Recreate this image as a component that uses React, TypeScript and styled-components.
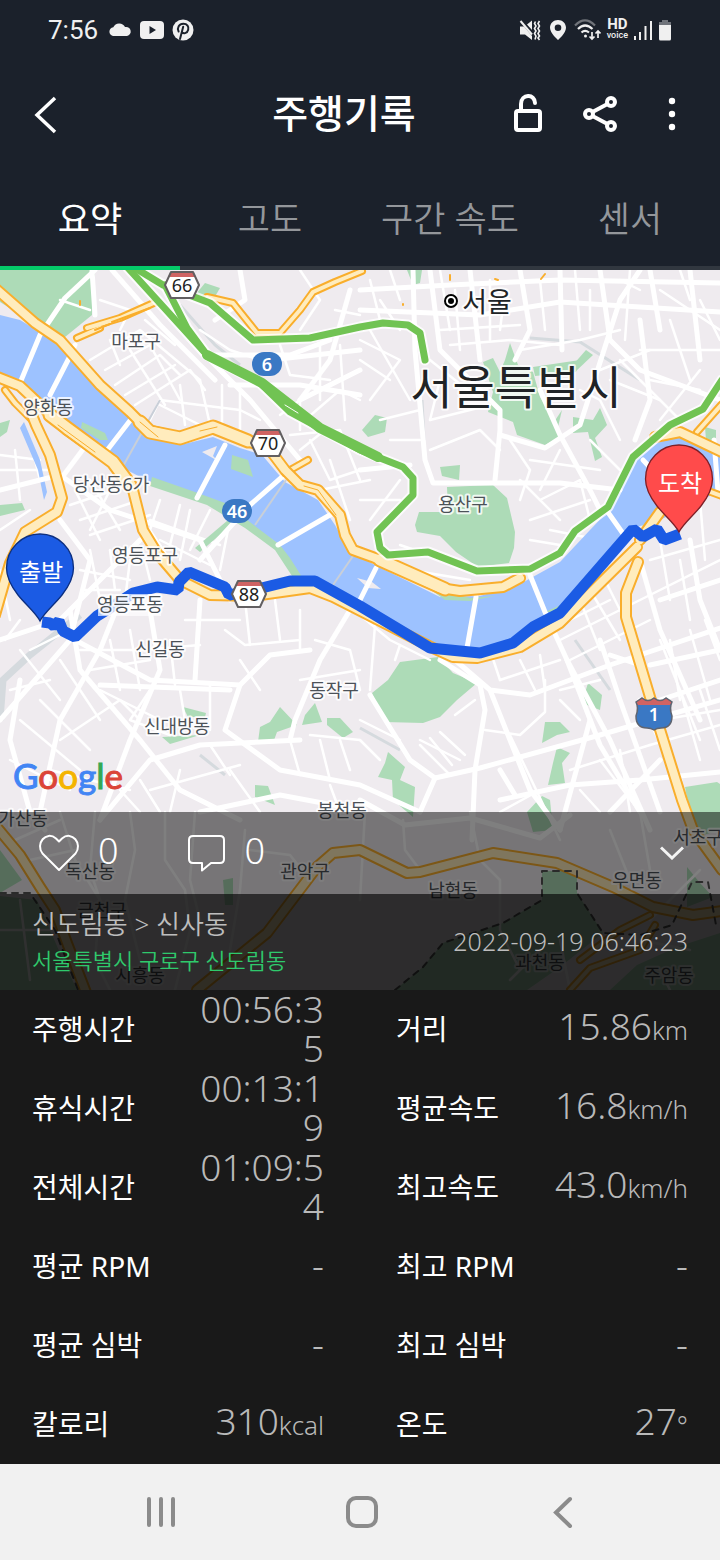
import React from 'react';
import styled, { createGlobalStyle } from 'styled-components';

const GlobalStyle = createGlobalStyle`
  * { box-sizing: border-box; }
  html, body { margin: 0; padding: 0; }
  body {
    background: #191919;
    font-family: "Noto Sans", "Noto Sans CJK KR", sans-serif;
    color: #fff;
  }
  button { border: 0; padding: 0; background: none; color: inherit; font: inherit; }
`;

const Screen = styled.div`
  display: flex;
  flex-direction: column;
  min-height: 100vh;
`;

/* ---------- top area ---------- */

const StatusBar = styled.div`
  display: flex;
  align-items: center;
  justify-content: space-between;
  height: 60px;
  padding: 0 48px;
  background: #1b212b;
  color: #f0f0f0;
`;

const StatusGroup = styled.div<{ $gap: number }>`
  display: flex;
  align-items: center;
  gap: ${(p) => p.$gap}px;
  svg { display: block; }
`;

const Clock = styled.span`
  font: 400 26px/30px Roboto, sans-serif;
`;

const HdVoice = styled.span`
  display: flex;
  flex-direction: column;
  align-items: center;
  padding-bottom: 2px;
  font: 700 15px/13px Roboto, sans-serif;
`;

const VoiceLine = styled.span`
  font: 500 9px/9px Roboto, sans-serif;
`;

const AppBar = styled.header`
  display: grid;
  grid-template-columns: 196px 1fr 216px;
  align-items: center;
  height: 108px;
  padding-right: 12px;
  background: #1b212b;
`;

const Title = styled.h1`
  margin: 0;
  padding-bottom: 2px;
  font-size: 39px;
  line-height: 56px;
  font-weight: 500;
  text-align: center;
  white-space: nowrap;
`;

const BarButton = styled.button`
  display: flex;
  align-items: center;
  justify-content: center;
  width: 72px;
  height: 72px;
`;

const BackButton = styled(BarButton)`
  margin-left: 10px;
`;

const Actions = styled.div`
  display: flex;
`;

const Tabs = styled.nav`
  display: grid;
  grid-template-columns: repeat(4, 1fr);
  background: #1b212b;
`;

const Tab = styled.button<{ $active?: boolean }>`
  height: 102px;
  padding-top: 4px;
  border-bottom: 4px solid ${(p) => (p.$active ? '#05ca69' : '#31373f')};
  color: ${(p) => (p.$active ? '#fff' : '#94979b')};
  font-size: 35px;
  font-weight: ${(p) => (p.$active ? 400 : 350)};
  line-height: 52px;
  white-space: nowrap;
`;

/* ---------- map ---------- */

const MapArea = styled.section`
  position: relative;
  overflow: hidden;
`;

const MapSvg = styled.svg`
  display: block;
  width: 100%;
  height: auto;
  background: #efebef;
`;

const PlaceName = styled.text`
  fill: #4c5258;
  stroke: #ffffffd0;
  stroke-width: 4px;
  stroke-linejoin: round;
  paint-order: stroke;
  font-size: 18px;
  text-anchor: middle;
`;

const CityName = styled(PlaceName)<{ $size: number }>`
  fill: #202326;
  font-size: ${(p) => p.$size}px;
`;

const ShieldText = styled.text<{ $light?: boolean }>`
  fill: ${(p) => (p.$light ? '#fff' : '#222')};
  font-size: 18px;
  font-weight: ${(p) => (p.$light ? 600 : 400)};
  text-anchor: middle;
`;

const PinText = styled.text`
  fill: #fff;
  font-size: 24px;
  text-anchor: middle;
`;

const Wordmark = styled.text`
  font-family: Lato, sans-serif;
  font-size: 35px;
  stroke-width: 1px;
`;

const MapOverlay = styled.div`
  position: absolute;
  left: 0;
  right: 0;
  bottom: 0;
`;

const SocialBar = styled.div`
  display: flex;
  align-items: center;
  gap: 68px;
  height: 82px;
  padding: 0 24px 0 38px;
  background: rgba(0, 0, 0, 0.5);
`;

const SocialButton = styled.button`
  display: flex;
  align-items: center;
  gap: 18px;
`;

const Count = styled.span`
  padding-bottom: 4px;
  font-size: 36px;
  font-weight: 350;
  line-height: 42px;
`;

const ExpandButton = styled(BarButton)`
  width: 48px;
  height: 48px;
  margin-left: auto;
`;

const RideInfo = styled.div`
  display: flex;
  align-items: center;
  justify-content: space-between;
  height: 96px;
  padding: 0 32px 2px;
  background: rgba(0, 0, 0, 0.81);
`;

const RideName = styled.div`
  color: #bdbdbd;
  font-size: 26px;
  font-weight: 350;
  line-height: 38px;
`;

const RidePlace = styled.div`
  color: #2fc96c;
  font-size: 22px;
  font-weight: 350;
  line-height: 34px;
`;

const RideDate = styled.time`
  color: #bdbdbd;
  font-size: 25px;
  font-weight: 350;
  line-height: 36px;
`;

/* ---------- figures ---------- */

const Stats = styled.dl`
  display: grid;
  grid-template-columns: 1fr 1fr;
  column-gap: 72px;
  grid-auto-rows: 79px;
  align-content: start;
  flex: 1;
  margin: 0;
  padding: 0 32px;
  background: #191919;
`;

const Stat = styled.div`
  display: flex;
  align-items: center;
  justify-content: space-between;
`;

const StatLabel = styled.dt`
  padding-bottom: 2px;
  font-size: 28px;
  line-height: 40px;
  white-space: nowrap;
`;

const StatValue = styled.dd`
  width: 140px;
  margin: 0;
  padding-bottom: 4px;
  color: #b9b9b9;
  font-size: 37px;
  font-weight: 300;
  line-height: 39px;
  text-align: right;
  word-break: break-all;
`;

const Unit = styled.span`
  font-size: 26px;
`;

const NavBar = styled.footer`
  display: grid;
  grid-template-columns: repeat(3, 1fr);
  align-items: center;
  height: 96px;
  padding: 0 57px 0 60px;
  background: #f1f1f1;
`;

const NavButton = styled.button`
  display: flex;
  align-items: center;
  justify-content: center;
  height: 72px;
`;

/* ---------- map data ---------- */

const parks = [
  '0,270 95,270 92,315 65,337 45,330 0,302',
  '483,362 493,358 500,372 505,360 510,343 518,365 533,372 540,397 557,425 560,437 545,445 517,435 513,422 488,412 493,392',
  '533,367 580,360 576,372 535,376',
  '586,350 593,355 575,372 572,366',
  '573,417 593,420 600,408 607,425 595,438 602,457 595,461 588,432 573,433',
  '552,425 562,410 558,427',
  '375,415 387,418 385,432 368,437 362,430',
  '440,467 460,465 459,480 442,476',
  '447,487 493,485 507,498 515,532 514,548 509,563 478,567 456,552 440,536 417,532 415,525 419,512 448,512',
  '400,662 438,657 453,673 477,683 457,700 440,717 423,723 385,722 372,693 388,680',
  '588,683 602,695 600,710 582,703',
  '545,722 560,722 570,732 557,735 542,743',
  '557,747 570,753 562,763 565,783 548,785 553,763',
  '388,752 405,767 400,780 415,787 413,817 393,800 392,780 378,777 385,763',
  '542,796 550,800 553,830 533,832 527,812',
  '685,787 717,782 720,784 720,830 700,836 690,815',
  '183,707 206,713 205,717 188,717',
  '162,737 200,735 170,744',
  '280,707 297,725 277,732 273,743 258,742 260,727 270,722',
  '315,703 322,722 302,725 305,715',
  '327,718 340,718 353,732 343,738 327,725',
  '255,785 268,786 275,805 255,797',
  '223,880 233,878 233,905 225,905',
  '0,850 22,880 0,893',
  '0,896 37,900 60,953 77,990 0,990',
  '542,871 577,871 577,893 603,933 560,967 527,990 395,990 423,967 443,943 503,923 542,900',
  '687,867 700,883 713,897 687,907',
  '720,933 677,947 637,965 610,990 720,990',
  '205,283 220,288 213,300 196,294',
  '407,270 422,270 420,283 413,285',
  '0,505 22,503 25,510 0,516',
  '0,423 10,420 7,432 0,437',
  '705,427 716,430 716,445 706,440',
];

const riverPath =
  'M0 315 L20 320 45 335 70 350 100 385 130 412 148 436 180 445 213 437 240 448 262 455 285 482 318 500 335 525 350 552 375 565 440 597 480 596 520 584 560 562 590 530 612 507 635 460 665 437 690 432 720 450 720 492 700 500 660 520 627 530 560 612 533 625 513 642 480 652 430 645 360 603 313 577 302 577 290 565 280 545 233 512 207 498 150 482 123 468 113 455 67 430 55 408 25 388 0 373Z';

const riverside = [
  '82,422 105,433 108,440 100,440 81,428',
  '232,455 248,460 253,477 231,469',
  '152,477 195,492 225,503 280,545 290,558 302,577 292,576 275,550 245,528 207,505 150,486',
  '65,425 115,462 110,462 63,432',
  '420,582 440,590 470,598 495,596 470,601 445,600',
  '545,612 565,603 560,612',
  '658,510 642,526 652,530',
];

/* broad avenues */
const avenues = [
  '95,270 65,298 40,335 20,383', '92,270 95,315', '75,345 68,360 50,395',
  '132,418 105,453', '225,445 197,498', '290,470 250,505 200,560', '335,512 278,545',
  '376,568 360,600', '476,597 467,648', '530,575 545,612 567,660 600,745 640,812',
  '605,508 624,535', '643,460 660,478', '714,440 718,492',
  '130,270 200,350 250,400 300,460', '112,270 160,325 215,380',
  '413,270 415,350 425,460 433,483 560,483 620,490', '430,270 440,350 500,410 500,430 495,480',
  '540,390 560,435 590,490 600,510', '500,435 545,448 580,425 620,300 640,270',
  '360,290 450,285 560,280 720,283', '360,310 480,315 560,302 720,312',
  '470,270 480,360', '520,270 530,330 515,360', '560,270 562,350', '600,270 610,340 640,370 720,400',
  '650,270 660,330', '690,270 700,360', '640,320 650,400 635,440',
  '360,470 410,465', '0,490 60,475 110,510 200,540 230,600',
  '0,640 60,620 110,570 140,540', '60,520 90,560 70,640 0,720',
  '70,610 80,670 140,740 180,790 240,820', '20,680 10,740 30,812 45,830',
  '120,600 100,650 60,720 40,812', '150,610 160,670 130,740 100,820',
  '75,640 150,680 240,685 270,655 310,650', '240,685 225,730 280,770 360,785 420,812',
  '100,685 230,690', '100,820 150,760 200,745 300,740', '200,600 195,680',
  '350,610 320,660 295,720 290,740', '440,660 480,685 485,710 475,770 472,840',
  '455,660 490,690 530,695 610,665 720,628', '610,655 640,665 650,690',
  '490,690 530,790 560,830', '567,660 610,740 650,830', '600,640 620,700 660,812',
  '640,560 660,630 700,720', '690,540 700,600 720,650', '660,600 720,580',
  '370,695 410,760 435,778 480,768 600,735 720,700', '435,778 420,812',
  '500,800 570,785 640,780 720,772', '590,720 560,830', '500,770 515,795',
  '660,760 610,812', '650,665 720,650', '660,700 720,680', '640,700 680,780',
  '360,800 405,825 470,818 540,838 570,815', '200,812 280,795 360,810',
  '240,270 245,300 215,320', '90,440 60,480', '270,360 360,350', '300,400 360,370',
  '230,385 300,385 360,395', '350,290 330,360 300,400', '215,355 290,355 330,340',
];

/* side streets */
const streets = [
  '90,360 140,330 200,380', '105,370 150,345', '115,385 160,355 180,375', '125,395 175,365', '135,405 190,370 205,390',
  '150,420 160,400 240,410 260,420', '160,405 200,425', '180,385 185,425', '200,380 210,425', '222,385 222,430', '240,390 240,430',
  '145,320 175,345', '150,345 180,400', '130,350 165,405', '110,340 120,365', '200,330 230,350 260,360',
  '300,270 320,300 300,330', '320,345 320,400', '340,345 345,420', '335,310 360,315', '280,345 290,375 330,380',
  '305,420 340,390 360,400', '290,435 340,430 360,480', '310,440 330,480 360,470', '320,490 370,480', '330,460 350,520',
  '300,450 325,430 350,440', '280,415 300,400 300,430', '60,300 90,310', '100,300 130,310 120,330',
  '0,455 40,460', '0,470 50,470', '15,450 20,500', '30,440 40,480', '0,530 30,510',
  '75,490 100,540', '90,480 120,530', '110,490 90,530', '80,520 140,500', '90,535 150,515', '70,505 130,485',
  '160,500 150,530 170,560', '180,505 170,545', '150,520 220,545', '160,540 210,565', '190,510 180,560', '210,510 190,550', '230,520 220,570',
  '80,570 130,580', '85,590 120,590', '90,550 100,600', '110,550 115,590', '130,560 125,600', '145,560 150,580',
  '0,570 10,620', '5,640 20,620', '20,560 30,560', '20,650 60,700', '10,690 50,680', '30,650 70,630',
  '80,650 140,650 200,645', '90,670 150,660', '110,640 120,690', '130,630 140,690', '170,640 175,685', '185,620 240,620',
  '60,660 100,720', '40,700 90,750', '20,720 80,770', '10,760 70,790', '50,770 130,790', '60,740 120,700 140,720',
  '100,690 160,720', '150,690 130,720 170,735', '180,690 185,720', '210,685 210,730', '225,630 245,645 300,640',
  '245,600 250,645', '275,600 280,640', '300,610 300,650', '240,660 260,690', '315,640 350,650 360,690', '300,680 360,670',
  '310,735 360,740', '340,740 350,770', '290,740 300,775', '320,740 330,780', '230,770 260,812', '210,745 230,775',
  '140,780 160,812', '150,790 240,765', '170,812 180,770', '120,790 140,812', '330,785 340,812',
  '360,615 390,640 430,660', '375,625 370,690', '400,645 395,660', '360,720 400,740', '360,740 380,760',
  '420,740 460,760', '420,745 450,775', '430,738 452,765', '440,732 465,755', '455,715 475,700', '485,730 520,735 545,712 545,680',
  '490,650 500,680', '540,655 545,690', '520,660 535,690', '500,680 560,660',
  '580,600 600,650', '590,590 620,640', '605,580 640,650', '560,640 640,600', '570,660 650,620', '560,625 610,600', '640,600 720,560',
  '650,560 720,540', '660,540 670,600', '700,500 705,560', '680,560 690,620', '670,640 680,700', '690,630 710,700', '705,620 720,660',
  '660,640 700,740', '680,690 700,760', '700,690 720,750', '660,720 720,710', '650,745 720,725', '560,700 580,720', '560,690 600,680',
  '570,770 650,745', '600,760 640,812', '580,790 600,812', '620,750 630,812', '510,735 560,840', '540,790 500,812',
  '360,340 400,360 370,400', '360,360 390,380', '370,330 410,400', '380,300 400,330', '370,280 380,320', '390,270 400,300',
  '440,270 450,330', '455,290 460,350', '490,280 490,340', '505,290 500,330', '540,280 545,330', '575,270 580,330', '590,290 590,330',
  '620,280 640,290', '630,270 625,340', '660,290 720,330', '670,320 690,380', '640,350 720,350', '700,300 720,340', '680,270 690,300',
  '440,330 520,325', '450,345 510,340 560,345', '520,350 580,340 620,330', '430,360 480,400', '380,420 420,410', '390,440 420,440',
  '430,420 490,405', '430,450 480,430 500,450', '440,380 430,420', '510,440 530,470 520,500', '530,460 600,470', '540,500 580,480 590,520',
  '530,520 590,500', '520,480 560,520', '550,530 600,540', '530,540 560,545', '560,450 540,490', '590,440 620,470', '600,400 620,440',
  '610,380 660,400', '620,360 680,420', '650,380 700,390', '660,420 700,370', '580,390 600,400', '600,370 650,350', '360,500 400,500',
  '370,520 400,480', '380,565 470,580', '400,545 450,562',
  '95,812 90,870 100,900 95,960 110,990', '130,812 135,850 125,900 140,960', '165,812 165,860 185,890 190,930 175,990',
  '195,812 190,880 200,920', '245,830 240,890 230,950', '60,812 75,860 100,900', '15,840 60,820', '30,860 75,850', '250,850 290,855 310,880',
  '365,812 360,900', '403,820 405,850 420,870', '470,812 480,860 500,880 500,930 520,970', '610,830 630,880', '640,812 650,870',
  '700,870 650,920', '560,940 570,990', '510,980 540,950', '20,900 30,980', '0,930 60,930', '640,940 690,950', '660,970 670,990',
];

const highways = [
  '-5,288 35,323 60,340 100,385 130,412 148,430 180,438 213,427 240,438 270,450 285,470 300,485 318,490 340,515 345,535 353,550 375,558 440,588 460,591 503,587 520,578',
  '-5,376 20,386 67,430 113,462 133,490 143,530 157,553 180,580 210,595 253,596 310,588 333,597 433,648 453,657 477,658 520,647 560,623 637,547',
  '30,410 36,425 50,455 62,498 57,512 25,532 10,563 -5,615',
  '638,562 626,593 626,617 653,707 682,800 693,830 722,870',
  '197,990 267,933 317,867 333,853 360,850 407,873 420,872 493,853 557,863 613,887 653,907 693,915 722,911',
  '-5,825 20,855 40,887 55,910 67,943 87,995',
  '655,437 680,432 722,452',
  '640,540 660,512',
];

/* stretches where both carriageways run side by side */
const wideHighways = [
  '50,415 67,428 113,462 130,485', '140,422 150,432 180,438 213,427 248,441', '380,560 445,589',
];

const minorHighways = [
  '87,328 120,318 156,302', '77,338 100,328', '207,297 233,303 257,333 280,333 300,310 313,292 335,282 362,271',
  '697,432 722,404', '700,488 722,496', '5,390 15,403 32,420', '570,990 590,968 640,950 655,925', '580,960 620,930 650,915', '285,473 308,460',
];

const greenways = [
  '128,268 207,355 260,383 290,412 360,450 380,458 403,467 413,478 413,495 377,532 380,548 388,555 428,552 477,571 530,569 560,553 575,531 608,507 633,457 670,425 703,409 722,380',
  '135,268 163,285 210,303 253,340 310,338 360,327 383,323 408,325 420,333 425,360',
  '165,285 187,328 207,355',
];

const routePoints =
  '42,622 50,623 54,626 59,621 63,631 75,637 97,616 110,608 133,593 157,587 178,590 179,582 189,572 225,587 229,595 245,592 290,581 315,581 360,606 430,648 480,653 513,643 533,627 560,613 633,529 643,537 657,529 664,540 680,534';

const places: [string, number, number][] = [
  ['마포구', 136, 348], ['양화동', 48, 414], ['당산동6가', 111, 491], ['용산구', 463, 511],
  ['영등포구', 145, 562], ['영등포동', 130, 611], ['신길동', 160, 656], ['동작구', 334, 697],
  ['신대방동', 177, 733], ['봉천동', 342, 817], ['가산동', 23, 825], ['독산동', 90, 878],
  ['관악구', 305, 878], ['서초구', 698, 844], ['남현동', 453, 897], ['우면동', 637, 887],
  ['금천구', 102, 917], ['시흥동', 140, 982], ['과천동', 540, 969], ['주암동', 669, 982],
];

const wordmark: [string, string][] = [
  ['G', '#4285f4'], ['o', '#db4437'], ['o', '#f4b400'], ['g', '#4285f4'], ['l', '#34a853'], ['e', '#db4437'],
];

const HexShield = ({ x, y, label }: { x: number; y: number; label: string }) => (
  <g transform={`translate(${x} ${y})`}>
    <path d="M-17 0L-11 -13H11L17 0L11 13H-11Z" fill="#fff" />
    <path d="M-14 -8L-11 -13H11L14 -8Z" fill="#cf6363" />
    <path d="M-17 0L-11 -13H11L17 0L11 13H-11Z" fill="none" stroke="#625f61" strokeWidth="2" strokeLinejoin="round" />
    <ShieldText y="7">{label}</ShieldText>
  </g>
);

const PillShield = ({ x, y, label }: { x: number; y: number; label: string }) => (
  <g transform={`translate(${x} ${y})`}>
    <rect x="-15" y="-12" width="30" height="24" rx="12" fill="#3a78c4" />
    <ShieldText $light y="7">{label}</ShieldText>
  </g>
);

const Pin = ({ x, y, fill, edge, label }: { x: number; y: number; fill: string; edge: string; label: string }) => (
  <g transform={`translate(${x} ${y})`}>
    <path
      d="M0 0C-4 -8 -14 -16 -22 -26C-29 -35 -33.500 -43 -33.500 -53A33.500 34 0 0 1 33.500 -53C33.500 -43 29 -35 22 -26C14 -16 4 -8 0 0Z"
      fill={fill}
      stroke={edge}
      strokeWidth="1.3"
    />
    <PinText x="1" y="-40">{label}</PinText>
  </g>
);

const RideMap = () => (
  <MapSvg viewBox="0 270 720 720" role="img" aria-label="서울특별시">
    {parks.map((p) => <polygon key={p} points={p} fill="#addbb7" />)}
    <g fill="none" stroke="#d5dade" strokeWidth="3">
      <polyline points="0,720 3,680 30,655 80,615" strokeWidth="7" />
      <polyline points="180,305 215,345 240,365" />
      <polyline points="530,338 580,342 640,380" />
      <polyline points="422,400 424,440" />
      <polyline points="575,640 610,690" />
      <polyline points="360,728 400,750" />
      <polyline points="200,755 225,775" />
    </g>
    <g fill="none" stroke="#fff" strokeWidth="2.500" strokeLinejoin="round" strokeLinecap="round">
      {streets.map((p) => <polyline key={p} points={p} />)}
    </g>
    <path d={riverPath} fill="#9dc2ff" />
    {riverside.map((p) => <polygon key={p} points={p} fill="#addbb7" />)}
    <path d="M202 452L217 446 213 456 218 461Z M357 578L372 582 381 589 368 588Z" fill="#efebef" />
    <path d="M24 422L40 460 47 492 44 500 38 470 20 428Z" fill="#9dc2ff" />
    <path d="M195 548L234 515L238 519L200 552Z" fill="#addbb7" />
    <g fill="none" stroke="#c9cfd8" strokeWidth="2">
      <path d="M160 400L122 468M286 480L255 525M353 556L333 585" />
    </g>
    <g fill="none" stroke="#fff" strokeWidth="5" strokeLinejoin="round" strokeLinecap="round">
      {avenues.map((p) => <polyline key={p} points={p} />)}
    </g>
    <g fill="none" strokeLinejoin="round" strokeLinecap="round">
      {minorHighways.map((p) => <polyline key={p} points={p} stroke="#f9ae2c" strokeWidth="8" />)}
      {minorHighways.map((p) => <polyline key={p} points={p} stroke="#ffecbd" strokeWidth="4" />)}
      {highways.map((p) => <polyline key={p} points={p} stroke="#f9ae2c" strokeWidth="12" />)}
      {wideHighways.map((p) => <polyline key={p} points={p} stroke="#f9ae2c" strokeWidth="15" />)}
      {highways.map((p) => <polyline key={p} points={p} stroke="#ffecbd" strokeWidth="8" />)}
      {wideHighways.map((p) => <polyline key={p} points={p} stroke="#ffecbd" strokeWidth="11" />)}
      <path d="M140 422L158 437M200 431L217 427M304 486L318 490L336 515M58 425L95 452" stroke="#f9ae2c" strokeWidth="1" />
      {greenways.map((p) => <polyline key={p} points={p} stroke="#fff" strokeWidth="11" strokeOpacity="0.8" />)}
      {greenways.map((p) => <polyline key={p} points={p} stroke="#71c353" strokeWidth="7" />)}
      <path d="M207 355L262 383L320 428L378 457" stroke="#71c353" strokeWidth="10" />
      <path d="M285 405L298 413" stroke="#fff" strokeWidth="1" />
      <path d="M95 330L110 324M112 322L150 308M80 301V305M450 275V280M495 279L498 280M541 279L545 274M403 305V304" stroke="#f9ae2c" strokeWidth="2" />
      <path
        d="M0 893L30 893L55 930L78 990M395 990L423 967L443 943L503 923L542 900V871H577V893L603 933L640 935L672 925L692 882H708L716 925"
        stroke="#555"
        strokeWidth="2"
        strokeDasharray="6 6"
      />
    </g>
    <polyline points={routePoints} fill="none" stroke="#1b5be4" strokeWidth="11" strokeLinejoin="bevel" />
    <rect x="98" y="594" width="63" height="22" fill="#ffffffa8" />
    {places.map(([name, x, y]) => <PlaceName key={name} x={x} y={y}>{name}</PlaceName>)}
    <g fill="none" stroke="#000">
      <circle cx="451" cy="301" r="6" fill="#fff" strokeWidth="2" />
      <circle cx="451" cy="301" r="3" fill="#000" stroke="none" />
    </g>
    <CityName $size={27} x="487" y="312">서울</CityName>
    <CityName $size={46} x="516" y="404">서울특별시</CityName>
    <HexShield x={182} y={285} label="66" />
    <HexShield x={268} y={443} label="70" />
    <HexShield x={249} y={594} label="88" />
    <PillShield x={267} y={364} label="6" />
    <PillShield x={237} y={511} label="46" />
    <g transform="translate(654 714)">
      <path d="M-18 -12L-12 -16Q-6 -11 0 -16Q6 -11 12 -16L18 -12Q15 -6 18 2Q18 14 7 14Q3 14 0 16Q-3 14 -7 14Q-18 14 -18 2Q-15 -6 -18 -12Z" fill="#3a78c4" />
      <path d="M-18 -12L-12 -16Q-6 -11 0 -16Q6 -11 12 -16L18 -12L16 -9H-16Z" fill="#cf6363" />
      <path d="M-18 -12L-12 -16Q-6 -11 0 -16Q6 -11 12 -16L18 -12Q15 -6 18 2Q18 14 7 14Q3 14 0 16Q-3 14 -7 14Q-18 14 -18 2Q-15 -6 -18 -12Z" fill="none" stroke="#5f6470" strokeWidth="1.5" />
      <ShieldText $light y="7">1</ShieldText>
    </g>
    <Pin x={40} y={621} fill="#1b5be4" edge="#0c2f80" label="출발" />
    <Pin x={679} y={532} fill="#ff4b4b" edge="#7d1f27" label="도착" />
    <Wordmark x="13" y="789">
      {wordmark.map(([letter, colour], i) => <tspan key={i} fill={colour} stroke={colour}>{letter}</tspan>)}
    </Wordmark>
  </MapSvg>
);

const stats: [string, string, string?][] = [
  ['주행시간', '00:56:35'], ['거리', '15.86', 'km'],
  ['휴식시간', '00:13:19'], ['평균속도', '16.8', 'km/h'],
  ['전체시간', '01:09:54'], ['최고속도', '43.0', 'km/h'],
  ['평균 RPM', '-'], ['최고 RPM', '-'],
  ['평균 심박', '-'], ['최고 심박', '-'],
  ['칼로리', '310', 'kcal'], ['온도', '27', '°'],
];

export default function App() {
  return (
    <Screen>
      <GlobalStyle />
      <StatusBar>
        <StatusGroup $gap={10}>
          <Clock>7:56</Clock>
          <StatusGroup $gap={8}>
            <svg width="24" height="24" viewBox="0 0 24 24" fill="currentColor">
              <path d="M5 18a5 4.500 0 0 1 .3-8.700A6.500 6.500 0 0 1 17 9A5 4.600 0 0 1 19 18Z" />
            </svg>
            <svg width="24" height="18" viewBox="0 0 24 18">
              <rect width="24" height="18" rx="4" fill="currentColor" />
              <path d="M9.500 5L16 9L9.500 13Z" fill="#1b212b" />
            </svg>
            <svg width="22" height="22" viewBox="0 0 22 22" fill="none">
              <circle cx="11" cy="11" r="10.500" fill="currentColor" />
              <path d="M8 20L11.200 7.800M6.600 12.500C4.800 9 7 4.800 11.300 4.800C15.300 4.800 17 7.600 16.200 10.700C15.300 14.500 11 15.300 9.900 12.900" stroke="#1b212b" strokeWidth="2" strokeLinecap="round" />
            </svg>
          </StatusGroup>
        </StatusGroup>
        <StatusGroup $gap={6}>
          <svg width="24" height="24" viewBox="0 0 24 24">
            <path d="M1 8.500H5L13 18V22L6 16.500H1Z M8 6.500L13 2.500V12Z" fill="currentColor" />
            <path d="M1.500 3L13 16.500" stroke="currentColor" strokeWidth="2" />
            <path d="M16.500 3.500L15.500 5.500L17 8L15.500 10.500L17 13L15.500 15.500L17 18L16 21.500M20.500 3L19 5.500L20.500 8L19 10.500L20.500 13L19 15.500L20.500 18L19 20L20.500 22" fill="none" stroke="currentColor" strokeWidth="1.600" />
          </svg>
          <svg width="18" height="22" viewBox="0 0 18 22">
            <path d="M9 1C4.500 1 1 4.400 1 8.700C1 14 9 21 9 21S17 14 17 8.700C17 4.400 13.500 1 9 1ZM9 12A3.300 3.300 0 1 1 9 5.400A3.300 3.300 0 0 1 9 12Z" fill="currentColor" />
          </svg>
          <svg width="28" height="24" viewBox="0 0 28 24" fill="none" stroke="currentColor" strokeWidth="2.200">
            <path d="M2 7.500Q12 -2.500 22 7.500" strokeOpacity="0.4" />
            <path d="M5 11Q12 4 19.500 11M8.500 14.500Q12 11.300 16 14.500" />
            <circle cx="12.500" cy="18" r="1.500" fill="currentColor" stroke="none" />
            <path d="M19 14V21M16.500 18.500L19 21L21.500 18.500M25 20V13M22.500 15.500L25 13L27.500 15.500" strokeWidth="1.700" />
          </svg>
          <HdVoice>
            HD
            <VoiceLine>voice</VoiceLine>
          </HdVoice>
          <svg width="18" height="22" viewBox="0 0 18 22" fill="none" stroke="currentColor" strokeWidth="2">
            <path d="M1 21V17M6 21V13M11.500 21V7M17 21V2" />
          </svg>
          <svg width="14" height="22" viewBox="0 0 14 22">
            <path d="M4 1H10V3H13V7H1V3H4Z" fill="#70747b" />
            <path d="M1 6H13V20Q13 21.500 11.500 21.500H2.500Q1 21.500 1 20Z" fill="currentColor" />
          </svg>
        </StatusGroup>
      </StatusBar>

      <AppBar>
        <BackButton type="button" aria-label="뒤로">
          <svg width="28" height="40" viewBox="0 0 28 40" fill="none" stroke="#fff" strokeWidth="3.500">
            <path d="M23 4L5 21L23 38" />
          </svg>
        </BackButton>
        <Title>주행기록</Title>
        <Actions>
          <BarButton type="button" aria-label="잠금">
            <svg width="32" height="40" viewBox="0 0 32 40" fill="none" stroke="#fff" strokeWidth="4">
              <rect x="4" y="17" width="24" height="19" rx="2" />
              <path d="M9 17V10C9 -0.500 23 -0.500 23 9" strokeLinecap="round" />
            </svg>
          </BarButton>
          <BarButton type="button" aria-label="공유">
            <svg width="36" height="40" viewBox="0 0 36 40" fill="none" stroke="#fff" strokeWidth="4">
              <circle cx="7" cy="20" r="4" />
              <circle cx="29" cy="8" r="4" />
              <circle cx="29" cy="32" r="4" />
              <path d="M10.500 18L25.500 10M10.500 22L25.500 30" />
            </svg>
          </BarButton>
          <BarButton type="button" aria-label="더보기">
            <svg width="8" height="34" viewBox="0 0 8 34" fill="#fff">
              <circle cx="4" cy="4" r="3.200" />
              <circle cx="4" cy="17" r="3.200" />
              <circle cx="4" cy="30" r="3.200" />
            </svg>
          </BarButton>
        </Actions>
      </AppBar>

      <Tabs>
        <Tab type="button" $active>요약</Tab>
        <Tab type="button">고도</Tab>
        <Tab type="button">구간 속도</Tab>
        <Tab type="button">센서</Tab>
      </Tabs>

      <MapArea>
        <RideMap />
        <MapOverlay>
          <SocialBar>
            <SocialButton type="button" aria-label="좋아요 0">
              <svg width="42" height="40" viewBox="0 0 42 40" fill="none" stroke="#fff" strokeWidth="2" strokeLinejoin="round">
                <path d="M21 37L4.500 20.500C-3 11 8 -3 18 5.500L21 8.500L24 5.500C34 -3 45 11 37.500 20.500Z" />
              </svg>
              <Count>0</Count>
            </SocialButton>
            <SocialButton type="button" aria-label="댓글 0">
              <svg width="40" height="40" viewBox="0 0 40 40" fill="none" stroke="#fff" strokeWidth="2" strokeLinejoin="round">
                <path d="M6 3H33Q37 3 37 7V26Q37 30 33 30H24L15 37.500V30H6Q2 30 2 26V7Q2 3 6 3Z" />
              </svg>
              <Count>0</Count>
            </SocialButton>
            <ExpandButton type="button" aria-label="접기">
              <svg width="24" height="14" viewBox="0 0 24 14" fill="none" stroke="#f4f4f4" strokeWidth="3">
                <path d="M1 1.500L12 12L23 1.500" />
              </svg>
            </ExpandButton>
          </SocialBar>
          <RideInfo>
            <div>
              <RideName>신도림동 &gt; 신사동</RideName>
              <RidePlace>서울특별시 구로구 신도림동</RidePlace>
            </div>
            <RideDate>2022-09-19 06:46:23</RideDate>
          </RideInfo>
        </MapOverlay>
      </MapArea>

      <Stats>
        {stats.map(([label, value, unit]) => (
          <Stat key={label}>
            <StatLabel>{label}</StatLabel>
            <StatValue>
              {value}
              {unit && <Unit>{unit}</Unit>}
            </StatValue>
          </Stat>
        ))}
      </Stats>

      <NavBar>
        <NavButton type="button" aria-label="최근 앱">
          <svg width="30" height="32" viewBox="0 0 30 32" stroke="#8b8b8b" strokeWidth="4" strokeLinecap="round">
            <path d="M3 3V29M15 3V29M27 3V29" />
          </svg>
        </NavButton>
        <NavButton type="button" aria-label="홈">
          <svg width="34" height="34" viewBox="0 0 34 34" fill="none" stroke="#8b8b8b" strokeWidth="4">
            <rect x="3" y="3" width="28" height="28" rx="8" />
          </svg>
        </NavButton>
        <NavButton type="button" aria-label="뒤로 가기">
          <svg width="20" height="34" viewBox="0 0 20 34" fill="none" stroke="#8b8b8b" strokeWidth="4" strokeLinecap="round">
            <path d="M17 4L3 17.500L17 31" />
          </svg>
        </NavButton>
      </NavBar>
    </Screen>
  );
}
